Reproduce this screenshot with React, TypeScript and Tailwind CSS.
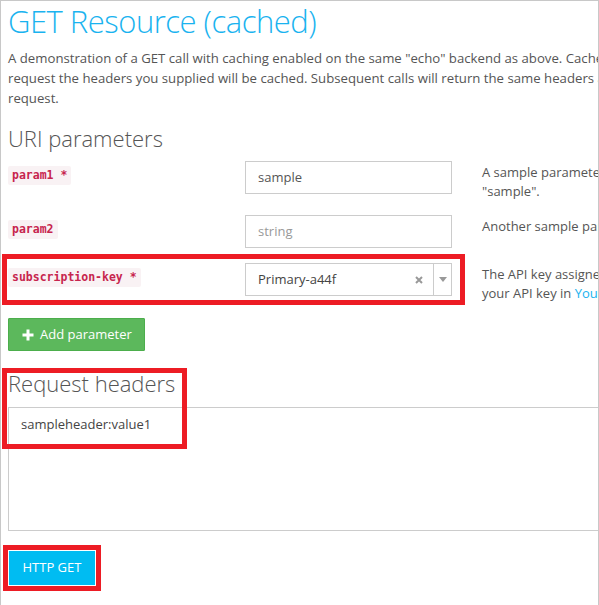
import React from "react";

const font = { fontFamily: '"Open Sans", "Noto Sans", Arial, sans-serif' };

function Label({ children }: { children: React.ReactNode }) {
  return (
    <span
      className="mt-[2px] inline-block h-[19px] whitespace-nowrap rounded-[2px] bg-[#f9f2f4] px-[4px] text-[11.5px] font-bold leading-[19px] text-[#c7254e]"
      style={{ fontFamily: '"DejaVu Sans Mono", "Liberation Mono", monospace' }}
    >
      {children}
    </span>
  );
}

export default function App() {
  return (
    <div
      className="relative h-[605px] w-[599px] overflow-hidden border-l border-r border-t border-[#c8c8c8] bg-white"
      style={font}
    >
      <div className="w-[1000px] pl-[7px]">
        <h1 className="mt-[1px] text-[31px] font-light leading-[38px] tracking-[-0.5px] text-[#1ab3ef]">
          GET Resource (cached)
        </h1>
        <p className="mt-[8px] whitespace-nowrap text-[13.2px] leading-[20px] text-[#555]">
          A demonstration of a GET call with caching enabled on the same "echo" backend as above. Cache TTL is set to 1 hour. When you make the first
          <br />
          request the headers you supplied will be cached. Subsequent calls will return the same headers as the first
          <br />
          request.
        </p>
        <h2 className="mt-[16px] text-[22px] font-light leading-[28px] text-[#555]">URI parameters</h2>

        <div className="mt-[9px] flex flex-col">
          <div className="flex h-[54px] items-start">
            <div className="w-[237px]">
              <Label>param1 *</Label>
            </div>
            <div className="flex h-[33px] w-[207px] items-center border border-[#ccc] pl-[12px] text-[13px] text-[#555]">
              sample
            </div>
            <div className="ml-[30px] mt-[2px] whitespace-nowrap text-[13px] leading-[19px] text-[#555]">
              A sample parameter that is required and has a default value of
              <br />
              "sample".
            </div>
          </div>

          <div className="flex h-[48px] items-start">
            <div className="w-[237px]">
              <Label>param2</Label>
            </div>
            <div className="flex h-[33px] w-[207px] items-center border border-[#ccc] pl-[12px] text-[13px] text-[#999]">
              string
            </div>
            <div className="ml-[30px] mt-[2px] whitespace-nowrap text-[13px] leading-[19px] text-[#555]">
              Another sample parameter, set to not required
            </div>
          </div>

          <div className="flex h-[55px] items-start">
            <div className="w-[237px]">
              <Label>subscription-key *</Label>
            </div>
            <div className="flex h-[33px] w-[207px] items-stretch border border-[#ccc] text-[13px] text-[#444]">
              <div className="flex flex-1 items-center pl-[12px]">Primary-a44f</div>
              <div className="flex w-[16px] items-center justify-center">
                <svg width="8" height="8" viewBox="0 0 8 8">
                  <path d="M1 1L7 7M7 1L1 7" stroke="#999" strokeWidth="2" />
                </svg>
              </div>
              <div className="ml-[6px] flex w-[18px] items-center justify-center border-l border-[#ccc]">
                <svg width="8" height="5" viewBox="0 0 8 5">
                  <path d="M0 0H8L4 5Z" fill="#999" />
                </svg>
              </div>
            </div>
            <div className="ml-[30px] mt-[2px] whitespace-nowrap text-[13px] leading-[19px] text-[#555]">
              The API key assigned to your account. You can find
              <br />
              your API key in <span className="text-[#1ab3ef]">Your profile</span>.
            </div>
          </div>
        </div>

        <button className="flex h-[33px] items-center gap-[6px] rounded-[1px] border border-[#4cae4c] bg-[#5cb85c] pl-[13px] pr-[12px] text-[13px] text-white">
          <svg width="12" height="12" viewBox="0 0 12 12">
            <path d="M6 0.5V11.5M0.5 6H11.5" stroke="white" strokeWidth="3" />
          </svg>
          Add parameter
        </button>

        <h2 className="mt-[18px] text-[22px] font-light leading-[28px] text-[#555]">Request headers</h2>

        <textarea
          className="mt-[10px] block h-[124px] w-[980px] resize-none border border-[#ccc] pl-[12px] pt-[6px] text-[13px] leading-[20px] text-[#444] outline-none"
          defaultValue="sampleheader:value1"
          style={font}
        />

        <button className="mt-[20px] ml-[1px] h-[34px] w-[86px] bg-[#00bcf2] text-[13px] text-white outline outline-[5px] outline-offset-[1px] outline-[#ed1c24]">
          HTTP GET
        </button>
      </div>

      <div className="pointer-events-none absolute left-[1px] top-[253px] h-[51px] w-[463px] border-[5px] border-[#ed1c24]" />
      <div className="pointer-events-none absolute left-[1px] top-[367px] h-[81px] w-[185px] border-[5px] border-[#ed1c24]" />
    </div>
  );
}
